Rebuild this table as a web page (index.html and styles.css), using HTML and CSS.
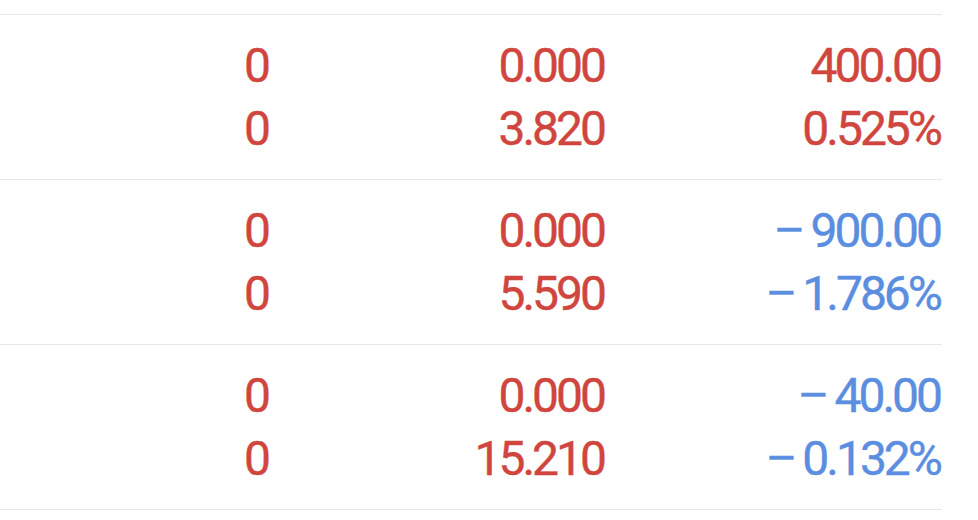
FILE: index.html
```html
<!DOCTYPE html>
<html>
<head>
<meta charset="utf-8">
<link rel="stylesheet" href="styles.css">
</head>
<body>
<div class="table">
  <div class="row">
    <div class="cell"><span class="up">0</span><span class="up">0</span></div>
    <div class="cell"><span class="up">0.000</span><span class="up">3.820</span></div>
    <div class="cell"><span class="up">400.00</span><span class="up">0.525%</span></div>
  </div>
  <div class="row">
    <div class="cell"><span class="up">0</span><span class="up">0</span></div>
    <div class="cell"><span class="up">0.000</span><span class="up">5.590</span></div>
    <div class="cell"><span class="down"><span class="minus">−</span>900.00</span><span class="down"><span class="minus">−</span>1.786%</span></div>
  </div>
  <div class="row">
    <div class="cell"><span class="up">0</span><span class="up">0</span></div>
    <div class="cell"><span class="up">0.000</span><span class="up">15.210</span></div>
    <div class="cell"><span class="down"><span class="minus">−</span>40.00</span><span class="down"><span class="minus">−</span>0.132%</span></div>
  </div>
</div>
</body>
</html>
```
FILE: styles.css
```css
html, body {
  margin: 0;
  padding: 0;
  background: #ffffff;
}
.table {
  width: 942px;
  padding-top: 14px;
  font-family: Roboto, "Liberation Sans", sans-serif;
  font-size: 48px;
  font-weight: 400;
  letter-spacing: -3px;
  -webkit-text-stroke: 0.4px currentColor;
}
.row {
  display: grid;
  grid-template-columns: 268px 336px 336px;
  height: 164px;
  border-top: 1.5px solid #e8e8e8;
  align-content: center;
}
.row:last-child {
  border-bottom: 1.5px solid #e8e8e8;
}
.cell {
  display: flex;
  flex-direction: column;
  align-items: flex-end;
  line-height: 63px;
}
.minus {
  display: inline-block;
  margin-right: 6px;
  transform-origin: right center;
  transform: translateX(-2px) scaleX(1.2);
}
.up { color: #d0463f; }
.down { color: #5b8ee0; }
```
